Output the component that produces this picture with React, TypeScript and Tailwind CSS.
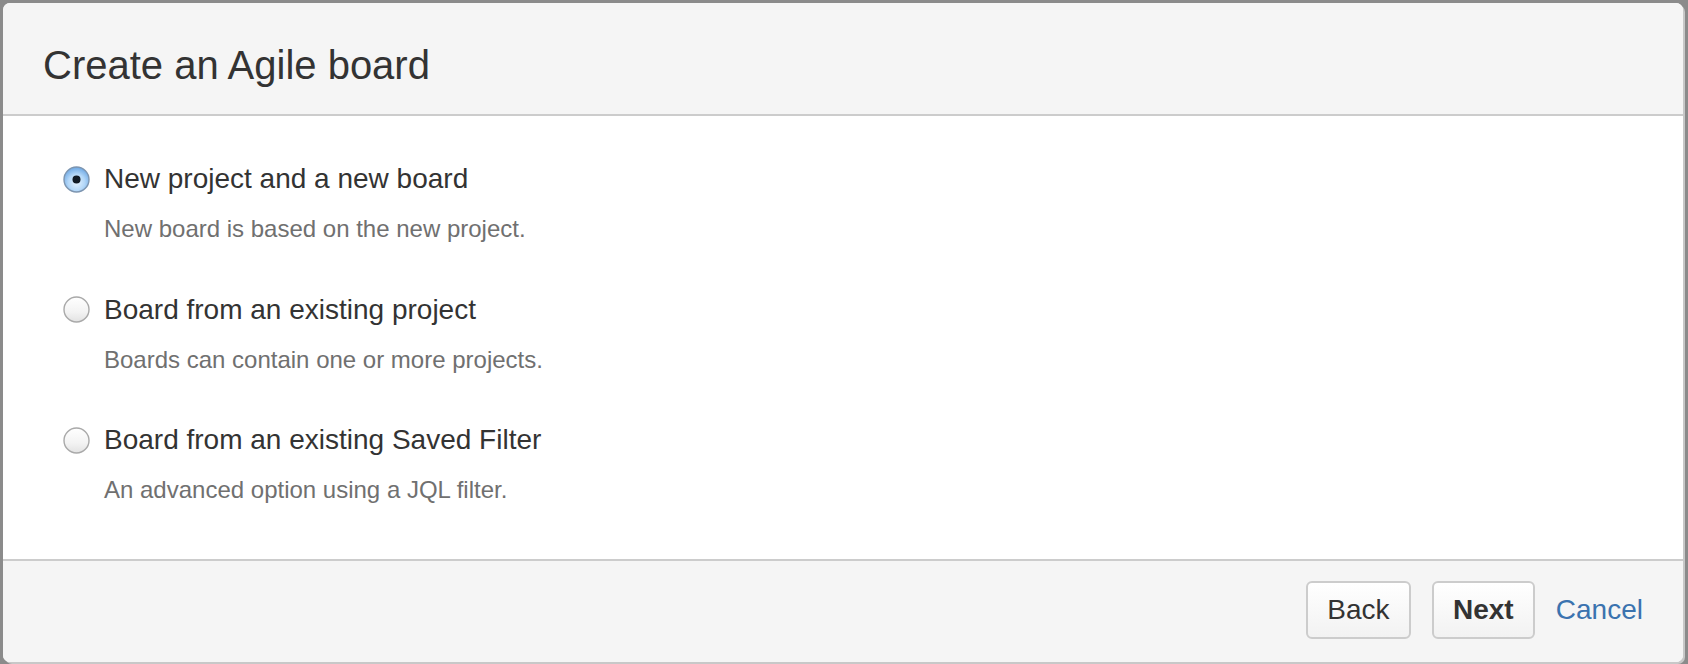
import { useState } from 'react'

const options = [
  { id: 'new', label: 'New project and a new board', desc: 'New board is based on the new project.' },
  { id: 'project', label: 'Board from an existing project', desc: 'Boards can contain one or more projects.' },
  { id: 'filter', label: 'Board from an existing Saved Filter', desc: 'An advanced option using a JQL filter.' },
]

function Radio({ checked, id }: { checked: boolean; id: string }) {
  return (
    <svg width="27" height="27" viewBox="0 0 27 27" className="shrink-0">
      <defs>
        <radialGradient id={`on-${id}`} cx="50%" cy="62%" r="60%">
          <stop offset="0%" stopColor="#e4f2fe" />
          <stop offset="55%" stopColor="#b3d7f8" />
          <stop offset="100%" stopColor="#6fa9e4" />
        </radialGradient>
        <linearGradient id={`off-${id}`} x1="0" y1="0" x2="0" y2="1">
          <stop offset="0%" stopColor="#ffffff" />
          <stop offset="60%" stopColor="#f3f3f3" />
          <stop offset="100%" stopColor="#e2e2e2" />
        </linearGradient>
      </defs>
      {checked ? (
        <>
          <circle cx="13.5" cy="13.5" r="12.5" fill={`url(#on-${id})`} stroke="#7d95b0" strokeWidth="1.4" />
          <circle cx="13.5" cy="13.5" r="4" fill="#111b26" />
        </>
      ) : (
        <circle cx="13.5" cy="13.5" r="12.5" fill={`url(#off-${id})`} stroke="#a9a9a9" strokeWidth="1.4" />
      )}
    </svg>
  )
}

export default function App() {
  const [choice, setChoice] = useState('new')
  return (
    <div className="w-[1688px] h-[664px] bg-[#8b8b8b] pl-[3px] pt-[3px] overflow-hidden" style={{ fontFamily: '"Liberation Sans", Arial, sans-serif' }}>
      <div className="w-[1680px] h-[659px] bg-white rounded-[7px] overflow-hidden flex flex-col shadow-[2px_2px_0_0_#c8c8c8]">
        <div className="h-[113px] shrink-0 bg-[#f5f5f5] border-b-2 border-[#cccccc] pl-[40px] pt-[38px]">
          <h2 className="text-[40px] leading-[48px] text-[#333333] font-normal">Create an Agile board</h2>
        </div>
        <div className="h-[443px] shrink-0 pl-[60px] pt-[43px] flex flex-col gap-[44.5px]">
          {options.map(o => (
            <div key={o.id} className="cursor-pointer" onClick={() => setChoice(o.id)}>
              <div className="flex items-center gap-[14px]">
                <Radio checked={choice === o.id} id={o.id} />
                <span className="text-[28px] leading-[40px] text-[#333333]">{o.label}</span>
              </div>
              <div className="pl-[41px] mt-[14px] text-[24px] leading-[32px] text-[#707070]">{o.desc}</div>
            </div>
          ))}
        </div>
        <div className="flex-1 bg-[#f5f5f5] border-t-2 border-[#cccccc] pt-[20px] pr-[40px] flex justify-end items-start gap-[21px]">
          <button className="w-[105px] h-[58px] flex items-center justify-center border-2 border-[#cccccc] rounded-[6px] bg-gradient-to-b from-white to-[#f2f2f2] text-[28px] text-[#333333]">
            Back
          </button>
          <button className="w-[103px] h-[58px] flex items-center justify-center border-2 border-[#cccccc] rounded-[6px] bg-gradient-to-b from-white to-[#f2f2f2] text-[28px] font-bold text-[#333333]">
            Next
          </button>
          <a href="#" className="h-[58px] flex items-center text-[28px] text-[#3b73af]">
            Cancel
          </a>
        </div>
      </div>
    </div>
  )
}
